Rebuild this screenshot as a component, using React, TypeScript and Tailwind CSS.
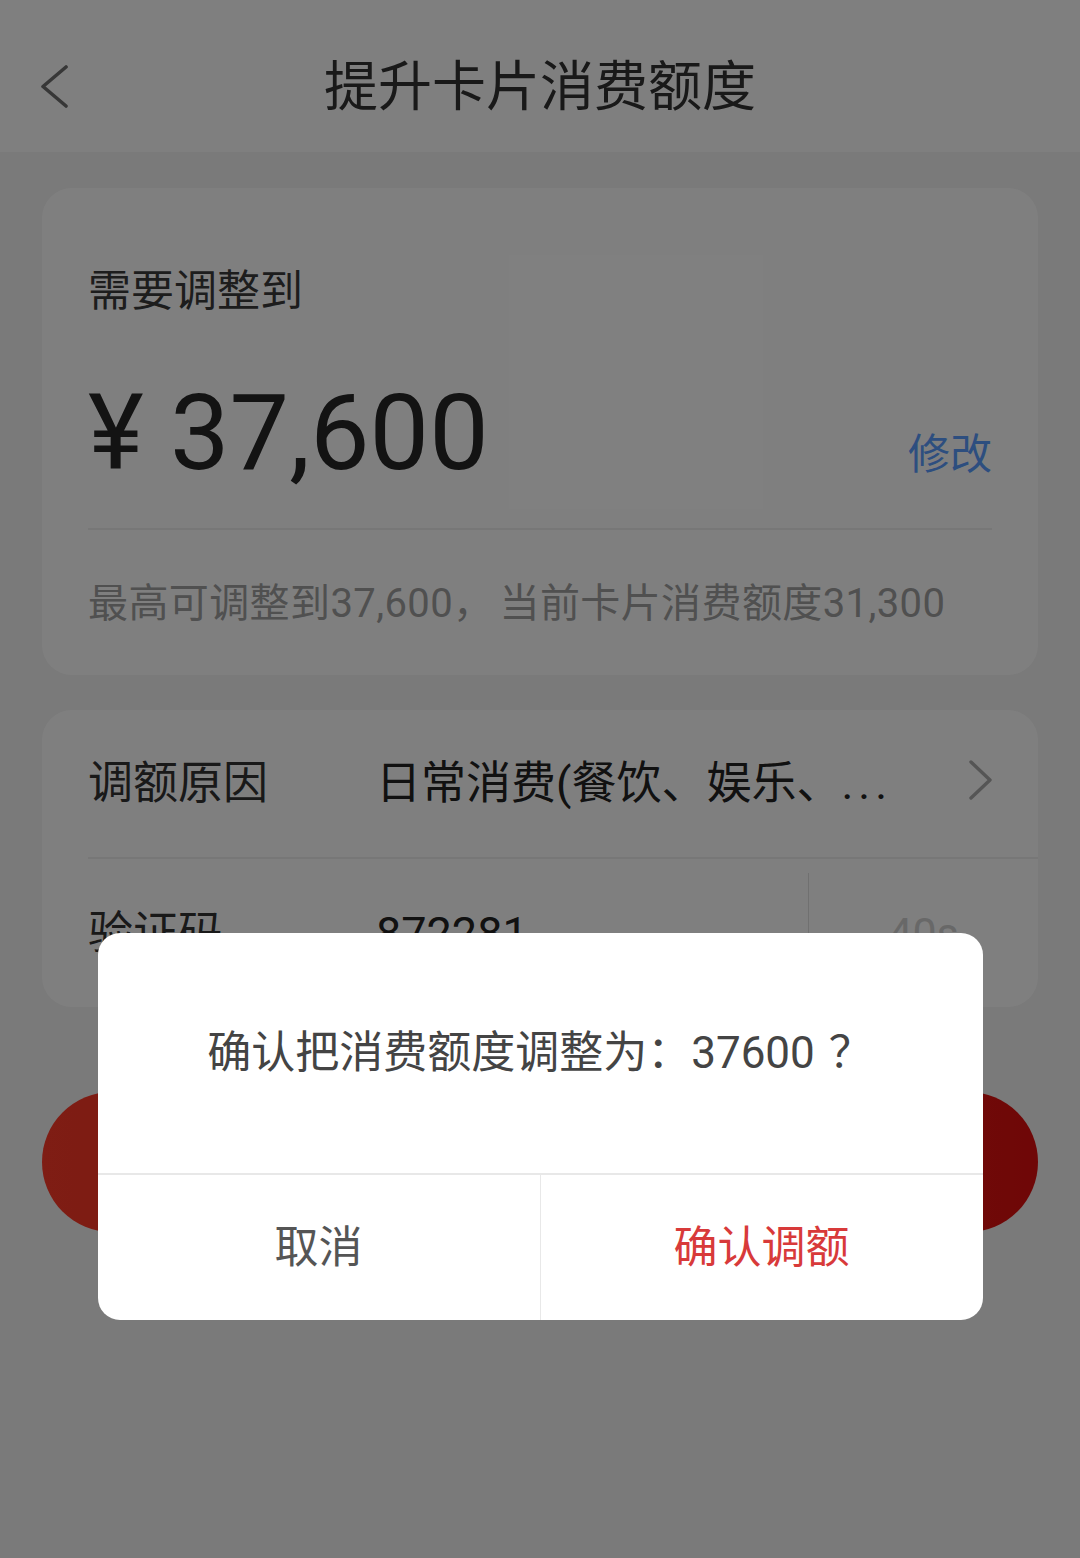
const font = { fontFamily: 'Roboto, "Noto Sans CJK SC", sans-serif' };

function Chevron({ dir, className }: { dir: 'left' | 'right'; className?: string }) {
  const pts = dir === 'left' ? '26,2 3,21.5 26,41' : '3,2 22,20 3,38';
  return (
    <svg viewBox={dir === 'left' ? '0 0 29 43' : '0 0 25 40'} className={className} fill="none" stroke="currentColor" strokeWidth={dir === 'left' ? 3.6 : 3.4} strokeLinecap="round" strokeLinejoin="round">
      <polyline points={pts} />
    </svg>
  );
}

export default function App() {
  return (
    <div className="relative min-h-[1558px] w-[1080px] bg-[#f4f4f4]" style={font}>
      {/* header */}
      <div className="relative flex h-[152px] items-center justify-center bg-white pt-[24px]">
        <Chevron dir="left" className="absolute left-[40px] top-[65px] h-[43px] w-[29px] text-[#6e6e6e]" />
        <h1 className="text-[54px] leading-none text-[#333]">提升卡片消费额度</h1>
      </div>

      {/* amount card */}
      <div className="mx-[42px] mt-[36px] rounded-[30px] bg-white px-[46px] pb-[51px] pt-[82px]">
        <div className="text-[43px] leading-none text-[#3a3a3a]">需要调整到</div>
        <div className="mt-[67px] flex items-baseline justify-between border-b-2 border-[#eeeeee] pb-[42px]">
          <div className="text-[106px] leading-none text-[#262626]">¥ 37,600</div>
          <span className="text-[42px] leading-none text-[#5a9cff]">修改</span>
        </div>
        <div className="mt-[54px] text-[40px] leading-none tracking-[0.4px] text-[#a0a0a0]">
          最高可调整到37,600，<span className="ml-[6px]">当前卡片消费额度31,300</span>
        </div>
      </div>

      {/* reason + code card */}
      <div className="mx-[42px] mt-[35px] overflow-hidden rounded-[30px] bg-white">
        <div className="ml-[46px] flex h-[149px] items-center border-b-2 border-[#eeeeee] pr-[45px]">
          <span className="w-[288px] text-[45px] leading-none text-[#333]">调额原因</span>
          <span className="flex-1 text-[45px] leading-none text-[#222]">
            日常消费(餐饮、娱乐、<span className="tracking-[5px]">...</span>
          </span>
          <Chevron dir="right" className="-mt-[8px] h-[40px] w-[25px] text-[#aaa]" />
        </div>
        <div className="ml-[46px] flex h-[148px] items-center">
          <span className="w-[288px] text-[45px] leading-none text-[#333]">验证码</span>
          <span className="flex-1 text-[45px] leading-none text-[#222]">872281</span>
          <div className="h-[120px] w-px bg-[#e0e0e0]" />
          <span className="w-[229px] text-center text-[43px] leading-none text-[#d0d0d0]">40s</span>
        </div>
      </div>

      {/* submit button */}
      <div className="mx-[42px] mt-[85px] flex h-[140px] items-center justify-center rounded-full bg-gradient-to-r from-[#fe3a28] to-[#de0e0e] text-[46px] text-white">
        确认提交
      </div>

      {/* mask + dialog */}
      <div className="absolute inset-0 flex flex-col items-center bg-black/50 pt-[933px]">
        <div className="w-[885px] overflow-hidden rounded-[22px] bg-white">
          <div className="flex h-[242px] items-center justify-center border-b-2 border-[#e8e8e8] text-[44px] leading-none text-[#444]">
            确认把消费额度调整为：37600<span className="ml-[14px]">？</span>
          </div>
          <div className="flex h-[145px]">
            <button className="flex flex-1 items-center justify-center border-r border-[#e8e8e8] text-[44px] text-[#555]">
              取消
            </button>
            <button className="flex flex-1 items-center justify-center text-[44px] text-[#d83a3a]">
              确认调额
            </button>
          </div>
        </div>
      </div>
    </div>
  );
}
